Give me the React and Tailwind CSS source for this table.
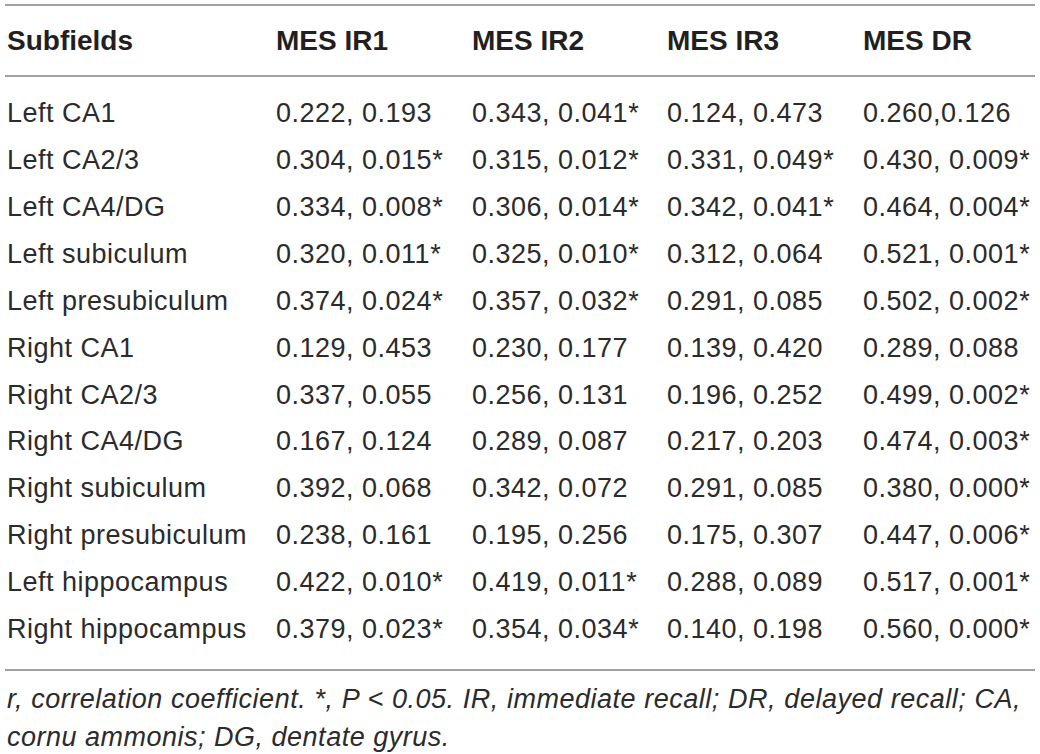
import React from 'react';

const rows = [
  ['Left CA1', '0.222, 0.193', '0.343, 0.041*', '0.124, 0.473', '0.260,0.126'],
  ['Left CA2/3', '0.304, 0.015*', '0.315, 0.012*', '0.331, 0.049*', '0.430, 0.009*'],
  ['Left CA4/DG', '0.334, 0.008*', '0.306, 0.014*', '0.342, 0.041*', '0.464, 0.004*'],
  ['Left subiculum', '0.320, 0.011*', '0.325, 0.010*', '0.312, 0.064', '0.521, 0.001*'],
  ['Left presubiculum', '0.374, 0.024*', '0.357, 0.032*', '0.291, 0.085', '0.502, 0.002*'],
  ['Right CA1', '0.129, 0.453', '0.230, 0.177', '0.139, 0.420', '0.289, 0.088'],
  ['Right CA2/3', '0.337, 0.055', '0.256, 0.131', '0.196, 0.252', '0.499, 0.002*'],
  ['Right CA4/DG', '0.167, 0.124', '0.289, 0.087', '0.217, 0.203', '0.474, 0.003*'],
  ['Right subiculum', '0.392, 0.068', '0.342, 0.072', '0.291, 0.085', '0.380, 0.000*'],
  ['Right presubiculum', '0.238, 0.161', '0.195, 0.256', '0.175, 0.307', '0.447, 0.006*'],
  ['Left hippocampus', '0.422, 0.010*', '0.419, 0.011*', '0.288, 0.089', '0.517, 0.001*'],
  ['Right hippocampus', '0.379, 0.023*', '0.354, 0.034*', '0.140, 0.198', '0.560, 0.000*'],
];

const headers = ['Subfields', 'MES IR1', 'MES IR2', 'MES IR3', 'MES DR'];

const cols = 'grid grid-cols-[269px_196px_195px_196px_1fr]';

export default function App() {
  return (
    <div className="bg-white w-[1040px] h-[754px] px-[5px] pt-[4px] text-[#231f20] font-['Liberation_Sans',Arial,sans-serif]">
      <div className="border-t-2 border-b-2 border-[#a0a0a0]">
        {/* header */}
        <div className={`${cols} h-[71px] items-center pl-[2px] border-b-2 border-[#a0a0a0] text-[28px] font-bold`}>
          {headers.map((h) => (
            <div key={h}>{h}</div>
          ))}
        </div>

        {/* body */}
        <div className="pt-[13px] pb-[16px] text-[#2b2b2b]">
          {rows.map((r) => (
            <div key={r[0]} className={`${cols} h-[46.9px] items-center pl-[2px] text-[27px] tracking-[0.5px]`}>
              {r.map((c, i) => (
                <div key={i} className="whitespace-nowrap">{c}</div>
              ))}
            </div>
          ))}
        </div>
      </div>

      {/* footnote */}
      <div className="pl-[2px] pt-[9px] text-[27px] leading-[38px] tracking-[0.5px] italic text-[#2b2b2b]">
        <p className="w-[1014px] text-justify [text-align-last:justify]">
          r, correlation coefficient. *, P &lt; 0.05. IR, immediate recall; DR, delayed recall; CA,
        </p>
        <p>cornu ammonis; DG, dentate gyrus.</p>
      </div>
    </div>
  );
}
